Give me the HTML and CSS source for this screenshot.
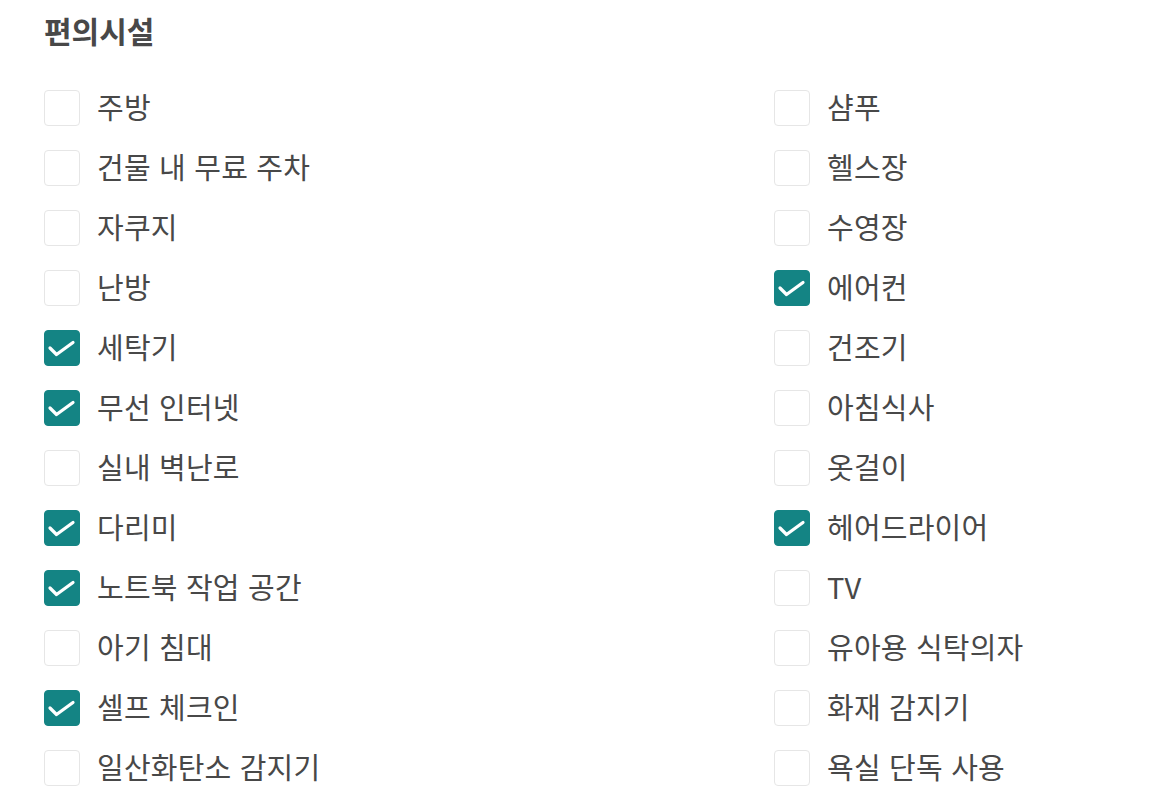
FILE: index.html
```html
<!DOCTYPE html>
<html lang="ko">
<head>
<meta charset="utf-8">
<link rel="stylesheet" href="styles.css">
</head>
<body>
<section class="amenities">
  <h2 class="title">편의시설</h2>
  <div class="grid">
    <div class="col">
      <label class="item"><span class="box"></span><span class="label">주방</span></label>
      <label class="item"><span class="box"></span><span class="label">건물 내 무료 주차</span></label>
      <label class="item"><span class="box"></span><span class="label">자쿠지</span></label>
      <label class="item"><span class="box"></span><span class="label">난방</span></label>
      <label class="item"><span class="box checked"><svg viewBox="0 0 36 36"><path d="M6 18 L12.5 24.5 L29 12.5"/></svg></span><span class="label">세탁기</span></label>
      <label class="item"><span class="box checked"><svg viewBox="0 0 36 36"><path d="M6 18 L12.5 24.5 L29 12.5"/></svg></span><span class="label">무선 인터넷</span></label>
      <label class="item"><span class="box"></span><span class="label">실내 벽난로</span></label>
      <label class="item"><span class="box checked"><svg viewBox="0 0 36 36"><path d="M6 18 L12.5 24.5 L29 12.5"/></svg></span><span class="label">다리미</span></label>
      <label class="item"><span class="box checked"><svg viewBox="0 0 36 36"><path d="M6 18 L12.5 24.5 L29 12.5"/></svg></span><span class="label">노트북 작업 공간</span></label>
      <label class="item"><span class="box"></span><span class="label">아기 침대</span></label>
      <label class="item"><span class="box checked"><svg viewBox="0 0 36 36"><path d="M6 18 L12.5 24.5 L29 12.5"/></svg></span><span class="label">셀프 체크인</span></label>
      <label class="item"><span class="box"></span><span class="label">일산화탄소 감지기</span></label>
    </div>
    <div class="col">
      <label class="item"><span class="box"></span><span class="label">샴푸</span></label>
      <label class="item"><span class="box"></span><span class="label">헬스장</span></label>
      <label class="item"><span class="box"></span><span class="label">수영장</span></label>
      <label class="item"><span class="box checked"><svg viewBox="0 0 36 36"><path d="M6 18 L12.5 24.5 L29 12.5"/></svg></span><span class="label">에어컨</span></label>
      <label class="item"><span class="box"></span><span class="label">건조기</span></label>
      <label class="item"><span class="box"></span><span class="label">아침식사</span></label>
      <label class="item"><span class="box"></span><span class="label">옷걸이</span></label>
      <label class="item"><span class="box checked"><svg viewBox="0 0 36 36"><path d="M6 18 L12.5 24.5 L29 12.5"/></svg></span><span class="label">헤어드라이어</span></label>
      <label class="item"><span class="box"></span><span class="label">TV</span></label>
      <label class="item"><span class="box"></span><span class="label">유아용 식탁의자</span></label>
      <label class="item"><span class="box"></span><span class="label">화재 감지기</span></label>
      <label class="item"><span class="box"></span><span class="label">욕실 단독 사용</span></label>
    </div>
  </div>
</section>
</body>
</html>
```
FILE: styles.css
```css
html, body {
  margin: 0;
  padding: 0;
  background: #ffffff;
}
body {
  font-family: "Noto Sans CJK KR", "Noto Sans", sans-serif;
  color: #484848;
}
.amenities {
  padding: 11px 44px 0 44px;
}
.title {
  margin: 0;
  font-size: 30px;
  line-height: 38px;
  font-weight: 700;
  color: #484848;
}
.grid {
  display: grid;
  grid-template-columns: 730px 1fr;
  margin-top: 41px;
}
.col {
  display: flex;
  flex-direction: column;
  gap: 24px;
}
.item {
  display: flex;
  align-items: center;
  height: 36px;
}
.box {
  box-sizing: border-box;
  width: 36px;
  height: 36px;
  border: 1.5px solid #e6e6e6;
  border-radius: 4px;
  background: #ffffff;
  flex: none;
  display: flex;
}
.box.checked {
  background: #148484;
  border-color: #148484;
}
.box svg {
  width: 36px;
  height: 36px;
  margin: -1.5px;
  fill: none;
  stroke: #ffffff;
  stroke-width: 3.2;
  stroke-linecap: round;
  stroke-linejoin: round;
}
.label {
  margin-left: 17px;
  margin-bottom: 4px;
  font-size: 29px;
  line-height: 36px;
  font-weight: 400;
  letter-spacing: 0.2px;
  white-space: nowrap;
}
```
